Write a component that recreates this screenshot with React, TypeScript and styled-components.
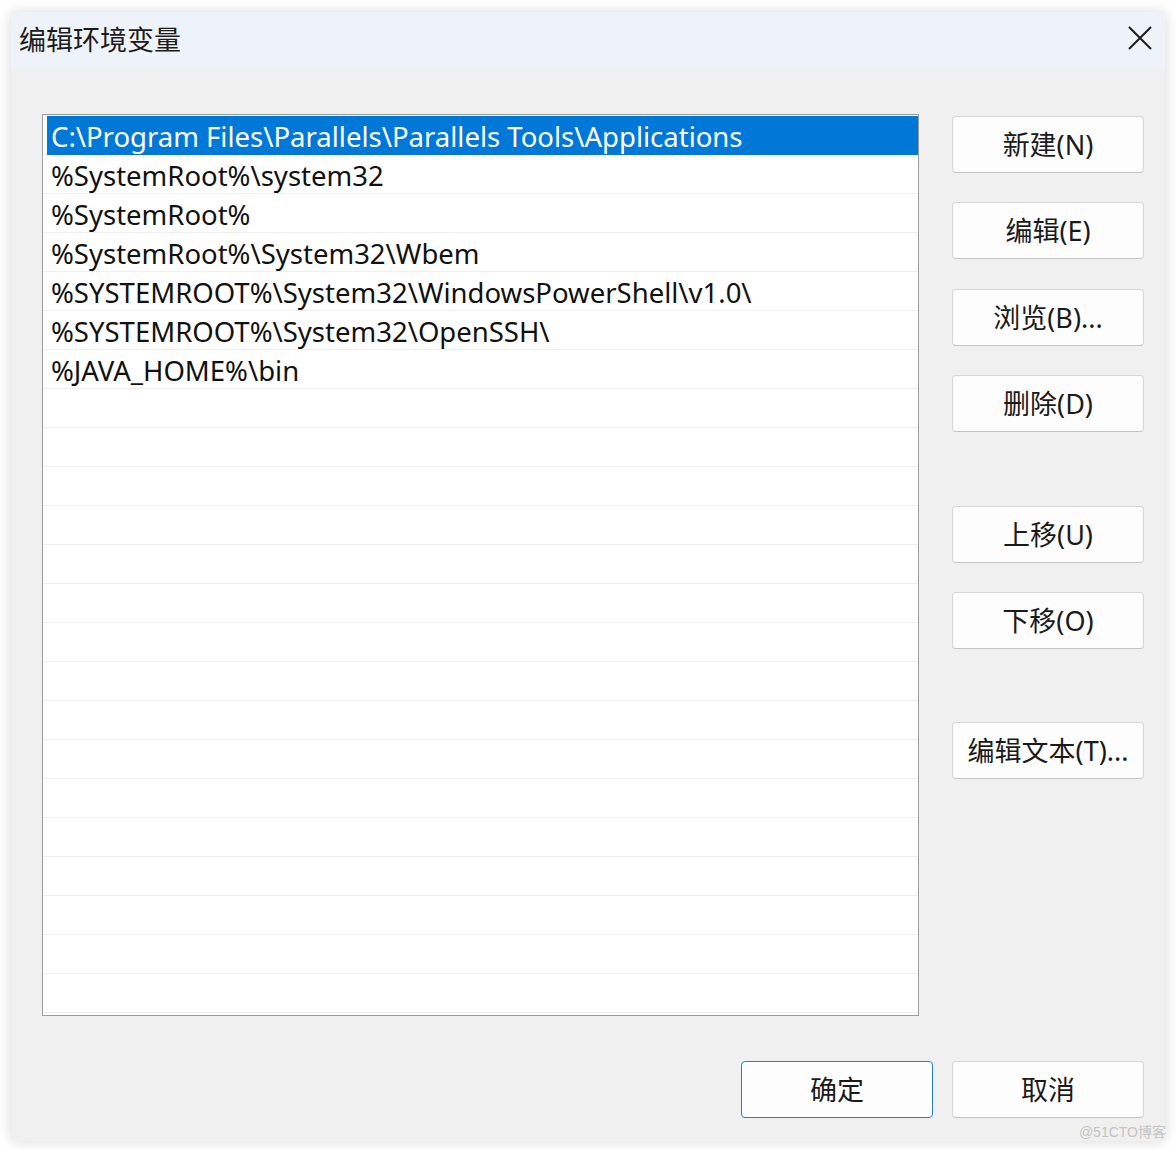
import { createGlobalStyle } from "styled-components";
import styled, { css } from "styled-components";

const GlobalStyle = createGlobalStyle`
  html, body {
    margin: 0;
    padding: 0;
    background: #ffffff;
  }
  body {
    font-family: "Noto Sans", "Noto Sans CJK SC", sans-serif;
  }
  * {
    box-sizing: border-box;
  }
`;

const CJK = `"Noto Sans", "Noto Sans CJK SC", sans-serif`;

const S = {
  Page: styled.div`
    position: relative;
    width: 1176px;
    height: 1149px;
    padding: 12px 11px 8px 11px;
  `,
  Window: styled.div`
    width: 1154px;
    height: 1129px;
    background: #f0f0f0;
    border-radius: 6px;
    box-shadow: 0 0 14px rgba(0, 0, 0, 0.16);
    display: flex;
    flex-direction: column;
    overflow: hidden;
  `,
  TitleBar: styled.div`
    height: 58px;
    flex-shrink: 0;
    background: #eef3fa;
    display: flex;
    align-items: center;
    justify-content: space-between;
    padding: 0 10px 0 8px;
  `,
  Title: styled.div`
    font-family: ${CJK};
    font-size: 27px;
    color: #1c1c1c;
    margin-top: -6px;
  `,
  Close: styled.button`
    width: 30px;
    height: 30px;
    border: none;
    background: transparent;
    padding: 0;
    display: flex;
    align-items: center;
    justify-content: center;
    margin-top: -6px;
  `,
  Body: styled.div`
    flex: 1;
    display: flex;
    flex-direction: column;
    padding: 44px 21px 23px 31px;
  `,
  Main: styled.div`
    display: flex;
    gap: 33px;
  `,
  List: styled.div`
    width: 877px;
    height: 902px;
    background: #ffffff;
    border: 1.5px solid #9a9ca0;
    padding-top: 1px;
    display: flex;
    flex-direction: column;
    overflow: hidden;
  `,
  Row: styled.div`
    height: 39px;
    flex-shrink: 0;
    border-bottom: 1px solid #efefef;
    display: flex;
    padding-left: 4px;
  `,
  Item: styled.div<{ $selected?: boolean }>`
    flex: 1;
    display: flex;
    align-items: center;
    padding: 2px 0 0 4px;
    font-family: "Noto Sans", sans-serif;
    font-size: 27.5px;
    color: #111111;
    white-space: nowrap;

    ${({ $selected }) =>
      $selected &&
      css`
        background: #0078d7;
        color: #ffffff;
        margin-bottom: -1px;
      `}
  `,
  Side: styled.div`
    width: 192px;
    display: flex;
    flex-direction: column;
    padding-top: 2px;
  `,
  Button: styled.button<{ $gap?: number; $primary?: boolean }>`
    width: 192px;
    height: 57px;
    margin-top: ${({ $gap }) => $gap ?? 0}px;
    background: #fdfdfd;
    border: 1px solid #d6d6d6;
    border-bottom-color: #c4c4c4;
    border-radius: 4px;
    font-family: ${CJK};
    font-size: 27px;
    color: #1a1a1a;
    display: flex;
    align-items: center;
    justify-content: center;
    padding: 0 0 2px 0;

    ${({ $primary }) =>
      $primary &&
      css`
        border: 1.5px solid #1f7fd6;
      `}
  `,
  Footer: styled.div`
    display: flex;
    justify-content: flex-end;
    gap: 19px;
    margin-top: 45px;
  `,
  Watermark: styled.div`
    position: absolute;
    right: 10px;
    bottom: 8px;
    font-family: "Liberation Sans", "Noto Sans CJK SC", sans-serif;
    font-size: 14px;
    color: #c4c4c4;
  `,
};

const paths = [
  "C:\\Program Files\\Parallels\\Parallels Tools\\Applications",
  "%SystemRoot%\\system32",
  "%SystemRoot%",
  "%SystemRoot%\\System32\\Wbem",
  "%SYSTEMROOT%\\System32\\WindowsPowerShell\\v1.0\\",
  "%SYSTEMROOT%\\System32\\OpenSSH\\",
  "%JAVA_HOME%\\bin",
];

const rows = Array.from({ length: 23 }, (_, i) => paths[i] ?? "");

const sideButtons = [
  { label: "新建(N)", gap: 0 },
  { label: "编辑(E)", gap: 29 },
  { label: "浏览(B)...", gap: 30 },
  { label: "删除(D)", gap: 29 },
  { label: "上移(U)", gap: 74 },
  { label: "下移(O)", gap: 29 },
  { label: "编辑文本(T)...", gap: 73 },
];

export default function App() {
  return (
    <S.Page>
      <GlobalStyle />
      <S.Window>
        <S.TitleBar>
          <S.Title>编辑环境变量</S.Title>
          <S.Close aria-label="关闭">
            <svg width="24" height="24" viewBox="0 0 24 24">
              <path
                d="M1 1 L23 23 M23 1 L1 23"
                stroke="#1c1c1c"
                strokeWidth="2"
                fill="none"
              />
            </svg>
          </S.Close>
        </S.TitleBar>
        <S.Body>
          <S.Main>
            <S.List>
              {rows.map((text, i) => (
                <S.Row key={i}>
                  <S.Item $selected={i === 0}>{text}</S.Item>
                </S.Row>
              ))}
            </S.List>
            <S.Side>
              {sideButtons.map((b) => (
                <S.Button key={b.label} $gap={b.gap}>
                  {b.label}
                </S.Button>
              ))}
            </S.Side>
          </S.Main>
          <S.Footer>
            <S.Button $primary>确定</S.Button>
            <S.Button>取消</S.Button>
          </S.Footer>
        </S.Body>
      </S.Window>
      <S.Watermark>@51CTO博客</S.Watermark>
    </S.Page>
  );
}
